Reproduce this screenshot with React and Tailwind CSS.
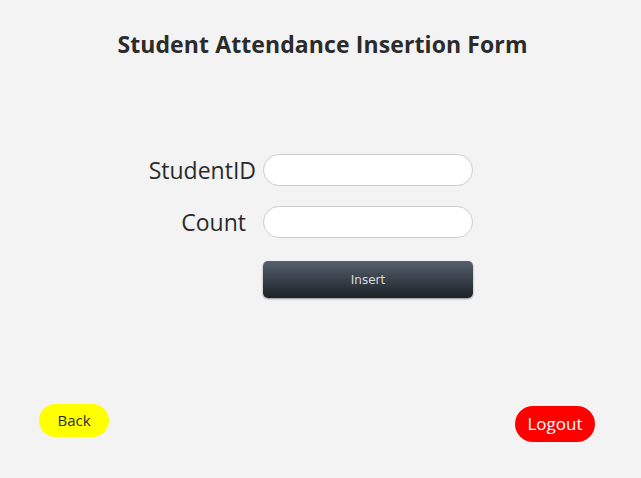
export default function App() {
  return (
    <div className="w-[641px] h-[478px] bg-[#f3f3f3] flex flex-col" style={{ fontFamily: '"Open Sans", "Noto Sans", sans-serif' }}>
      <h1 className="mt-[28px] text-center text-[23px] leading-[32px] font-bold text-[#2b2b2b] tracking-[0.1px] pl-[4px]">Student Attendance Insertion Form</h1>
      <div className="mt-[94px] flex flex-col">
        <div className="flex items-center h-[32px]">
          <div className="w-[257px] text-right pr-[1px] text-[23px] text-[#2b2b2b]">StudentID</div>
          <div className="ml-[6px] w-[210px] h-[32px] rounded-full bg-white border border-[#cfcfcf]"></div>
        </div>
        <div className="mt-[20px] flex items-center h-[32px]">
          <div className="w-[246px] text-right text-[23px] text-[#2b2b2b]">Count</div>
          <div className="ml-[17px] w-[210px] h-[32px] rounded-full bg-white border border-[#cfcfcf]"></div>
        </div>
        <div className="mt-[23px] ml-[263px] w-[210px] h-[37px] rounded-[5px] bg-gradient-to-b from-[#56626e] to-[#1d2228] shadow-[0_1px_2px_rgba(0,0,0,0.4)] flex items-center justify-center text-[12px] text-[#d8dbe0]" style={{ fontFamily: '"DejaVu Sans", sans-serif' }}>Insert</div>
      </div>
      <div className="mt-auto mb-[36px] flex justify-between items-end px-[39px] pr-[46px]">
        <div className="mb-[5px] w-[70px] h-[33px] rounded-full bg-[#ffff00] flex items-center justify-center text-[15px] text-[#2b2b2b]">Back</div>
        <div className="w-[80px] h-[36px] rounded-full bg-[#ff0000] flex items-center justify-center text-[17px] text-white">Logout</div>
      </div>
    </div>
  );
}
